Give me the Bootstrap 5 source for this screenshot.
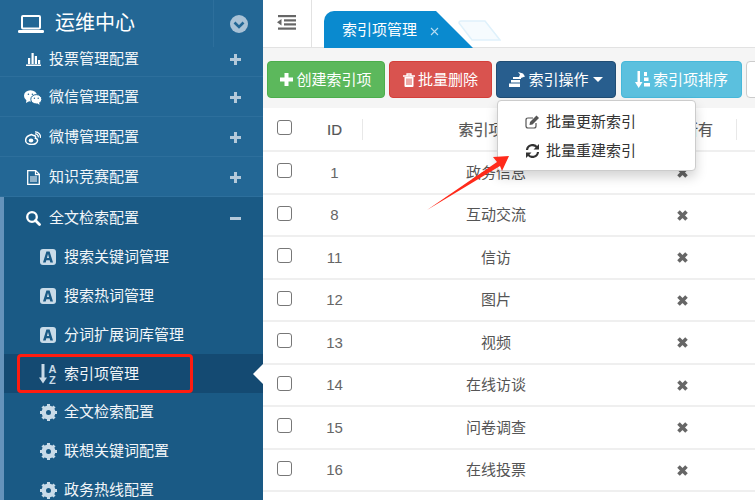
<!DOCTYPE html>
<html lang="zh-CN"><head><meta charset="utf-8">
<link href="https://cdn.jsdelivr.net/npm/bootstrap@5.3.0/dist/css/bootstrap.min.css" rel="stylesheet">
<style>
html,body{height:500px;overflow:hidden}
body{font-family:"Liberation Sans","Noto Sans CJK SC",sans-serif;font-size:15px;color:#555;background:#fff}
.app-shell{width:755px;height:500px;position:relative;overflow:hidden}
.side-bar{width:263px;height:500px;flex:none;background:#236795;color:#fff;overflow:hidden}
.brand-row{height:47px;margin-bottom:-5px;position:relative}
.brand-name{font-size:20px;margin-left:11px;line-height:46px;margin-top:-2px}
.brand-ico{margin-left:18px}
.brand-toggle{width:50px;height:47px;border-left:1px solid #2d6f9c;margin-left:auto}
.side-item{height:40px;border-bottom:1px solid #2d6f9c;padding:2px 22px 0 24px;font-size:15px;color:#f2f6f9}
.side-item.top-first{height:35px;padding-top:0}
.side-item .ico-slot{width:18px;margin-right:7px;flex:none;display:flex;justify-content:center}
.pm{margin-left:auto;fill:#b4c9da;display:block}
.side-open{background:#1a5a85;border-left:4px solid #6593bb;height:303px}
.side-open .side-item{border-bottom:0;padding-left:20px;padding-right:22px}
.sub-item{height:39px;padding:1px 0 0 35px;position:relative;color:#f2f6f9}
.sub-item.now~.sub-item{padding-top:0}
.sub-item .ico-slot{width:18px;margin-right:7px;flex:none;display:flex;justify-content:center}
.sub-item.now{background:#144a72}
.sub-item.now::after{content:"";position:absolute;right:0;top:10px;border:10px solid transparent;border-right-color:#fff;border-left:0}
.red-frame{position:absolute;left:13px;top:0;width:176px;height:39px;border:3px solid #ff1c10;border-radius:4px}
.main-pane{min-width:0;width:492px;flex:none}
.top-strip{height:48px;border-bottom:1px solid #e2e2e2;background:#fff}
.collapse-cell{width:49px;height:47px;border-right:1px solid #e2e2e2;flex:none;padding-top:15px;padding-left:14px}
.collapse-cell svg{display:block}
.tab-on{margin-left:12px;margin-top:11px;height:37px;width:112px;flex:none;background:#0a8acf;color:#fff;border-radius:10px 0 0 0;position:relative;padding:9px 0 0 18px;font-size:15px;line-height:20px;white-space:nowrap}
.tab-on::after{content:"";position:absolute;left:112px;top:0;border-style:solid;border-width:37px 0 0 37px;border-color:transparent transparent transparent #0a8acf}
.tab-x{position:relative;z-index:1;margin-left:13px}
.tab-ghost{margin-top:20px;margin-left:22px;display:block;flex:none}
.tool-strip{height:60px;background:#f5f5f5;padding:13px 0 0 4px;gap:4px}
.tool-btn{height:37px;border-radius:4px;font-size:15px;line-height:35px;padding:0;color:#fff;border:1px solid;white-space:nowrap;display:flex;align-items:center;justify-content:center;flex:none}
.tool-btn svg{margin-right:3px}
.tb-green{width:118px;background:#5cb85c;border-color:#4cae4c}
.tb-red{width:103px;background:#d9534f;border-color:#d43f3a}
.tb-navy{width:120px;background:#285e8e;border-color:#204d74}
.tb-cyan{width:121px;background:#5bc0de;border-color:#46b8da;margin-left:1px}
.tb-white{width:60px;background:#fff;border-color:#ccc}
.tb-caret{width:0;height:0;border-top:5px solid #fff;border-left:5px solid transparent;border-right:5px solid transparent;margin-left:4px}
.drop-box{position:absolute;left:497px;top:100px;width:199px;height:71px;background:#fff;border:1px solid #ccc;border-radius:4px;box-shadow:0 6px 12px rgba(0,0,0,.175);padding-top:6px;color:#333;z-index:3}
.drop-line{height:29px;padding-left:27px;font-size:15px;line-height:28px;gap:6px}
.data-grid{table-layout:fixed;width:492px;margin:0;color:#555}
.c-a{width:43px}.c-b{width:57px}.c-c{width:266px}.c-d{width:108px}
.data-grid th,.data-grid td{padding:0;text-align:center;vertical-align:middle;border-bottom:2px solid #efefef;background:#fff;font-size:15px;color:#555;box-shadow:none}
.data-grid th{height:43px;font-weight:400;position:relative;padding-top:3px;-webkit-text-stroke:.2px #555}
.data-grid th .chk-box{margin-top:-3px}
.data-grid td{height:42.5px;padding-top:1px}
.data-grid .id-cell{color:#666}
.col-sep::after{content:"";position:absolute;right:0;top:11px;height:21px;width:1px;background:#e8e8e8}
.chk-box{display:block;width:15px;height:15px;border:1.5px solid #777;border-radius:3px;margin:0 0 4px 14px;background:#fff}
.x-mark{display:inline-block;vertical-align:middle;margin:-2px 2px 0 0}
.arrow-mark{position:absolute;left:0;top:0;z-index:5;pointer-events:none}
</style></head><body>
<div class="app-shell d-flex">
<aside class="side-bar">
 <div class="brand-row d-flex align-items-center">
  <svg class="brand-ico" width="26" height="18" viewBox="0 0 26 18" fill="none"><rect x="4" y="1" width="18" height="12.500" rx="1" stroke="#fff" stroke-width="2"/><rect x="0" y="15" width="26" height="3" rx="1.200" fill="#fff"/></svg>
  <span class="brand-name">运维中心</span>
  <div class="brand-toggle d-flex align-items-center justify-content-center"><svg width="18" height="18" viewBox="0 0 18 18"><circle cx="9" cy="9" r="9" fill="#a9c2d6"/><path d="M4.500 7.500 9 12l4.500-4.500" stroke="#236795" stroke-width="2.600" fill="none"/></svg></div>
 </div>
 <div class="side-item top-first d-flex align-items-center"><span class="ico-slot"><svg width="15" height="13" viewBox="0 0 15 13" fill="#fff"><rect x="2" y="5" width="2.200" height="6"/><rect x="5.500" y="0" width="2.200" height="11"/><rect x="8.800" y="3" width="2.200" height="8"/><rect x="12" y="7" width="2.200" height="4"/><rect x="0" y="11.500" width="15" height="1.500"/></svg></span>投票管理配置<svg class="pm" width="11" height="11" viewBox="0 0 11 11"><path d="M4 0h3v4h4v3H7v4H4V7H0V4h4z"/></svg></div>
 <div class="side-item d-flex align-items-center"><span class="ico-slot"><svg width="18" height="15" viewBox="0 0 18 15" fill="#fff"><ellipse cx="6.500" cy="5.800" rx="6.500" ry="5.600"/><path d="M2.500 9.500 2 13l3.500-2z"/><ellipse cx="12.300" cy="9.300" rx="5.500" ry="4.700" stroke="#236795"/><path d="M15 12.500l.7 2.300-2.600-1.400z"/><circle cx="4.400" cy="4.200" r=".8" fill="#236795"/><circle cx="8.400" cy="4.200" r=".8" fill="#236795"/><circle cx="10.400" cy="8.200" r=".7" fill="#236795"/><circle cx="14.200" cy="8.200" r=".7" fill="#236795"/></svg></span>微信管理配置<svg class="pm" width="11" height="11" viewBox="0 0 11 11"><path d="M4 0h3v4h4v3H7v4H4V7H0V4h4z"/></svg></div>
 <div class="side-item d-flex align-items-center"><span class="ico-slot"><svg width="16" height="14" viewBox="0 0 16 14" fill="none"><path d="M6.500 3.500C3 4.500.6 7 .6 9.500c0 2.500 2.900 4 6 4 3.400 0 6-1.900 6-4 0-1.500-1.400-2-2.200-2.200.6-1.500.2-3-2-2.800z" stroke="#fff" stroke-width="1.500"/><ellipse cx="6" cy="9.500" rx="2.300" ry="1.900" fill="#fff"/><path d="M10 3a2.800 2.800 0 0 1 3.200 3.400M10 .8a5.200 5.200 0 0 1 5.400 6.200" stroke="#fff" stroke-width="1.300"/></svg></span>微博管理配置<svg class="pm" width="11" height="11" viewBox="0 0 11 11"><path d="M4 0h3v4h4v3H7v4H4V7H0V4h4z"/></svg></div>
 <div class="side-item d-flex align-items-center"><span class="ico-slot"><svg width="13" height="15" viewBox="0 0 13 15" fill="none"><path d="M.7.7h8l3.600 3.600v10H.7z" stroke="#fff" stroke-width="1.300"/><path d="M8.500.7v4h4" stroke="#fff" stroke-width="1.200"/><path d="M3 7h7M3 9h7M3 11h7" stroke="#fff" stroke-width="1.200"/></svg></span>知识竞赛配置<svg class="pm" width="11" height="11" viewBox="0 0 11 11"><path d="M4 0h3v4h4v3H7v4H4V7H0V4h4z"/></svg></div>
 <div class="side-open">
  <div class="side-item d-flex align-items-center"><span class="ico-slot"><svg width="15" height="15" viewBox="0 0 15 15" fill="none"><circle cx="6" cy="6" r="4.800" stroke="#fff" stroke-width="2.300"/><path d="m9.500 9.500 4 4" stroke="#fff" stroke-width="2.800" stroke-linecap="round"/></svg></span>全文检索配置<svg class="pm" width="11" height="3" viewBox="0 0 11 3"><rect width="11" height="3"/></svg></div>
  <div class="sub-item d-flex align-items-center"><span class="ico-slot"><svg width="16" height="16" viewBox="0 0 16 16"><rect width="16" height="16" rx="3" fill="#c9dbe8"/><path fill-rule="evenodd" d="M3 13.500 6.400 2.500h3.200L13 13.500h-2.700l-.6-2.300H6.300l-.6 2.300zM6.900 8.900h2.200L8 5z" fill="#1a5a85"/></svg></span>搜索关键词管理</div>
  <div class="sub-item d-flex align-items-center"><span class="ico-slot"><svg width="16" height="16" viewBox="0 0 16 16"><rect width="16" height="16" rx="3" fill="#c9dbe8"/><path fill-rule="evenodd" d="M3 13.500 6.400 2.500h3.200L13 13.500h-2.700l-.6-2.300H6.300l-.6 2.300zM6.900 8.900h2.200L8 5z" fill="#1a5a85"/></svg></span>搜索热词管理</div>
  <div class="sub-item d-flex align-items-center"><span class="ico-slot"><svg width="16" height="16" viewBox="0 0 16 16"><rect width="16" height="16" rx="3" fill="#c9dbe8"/><path fill-rule="evenodd" d="M3 13.500 6.400 2.500h3.200L13 13.500h-2.700l-.6-2.300H6.300l-.6 2.300zM6.900 8.900h2.200L8 5z" fill="#1a5a85"/></svg></span>分词扩展词库管理</div>
  <div class="sub-item now d-flex align-items-center"><span class="ico-slot"><svg width="18" height="20" viewBox="0 0 18 20" fill="#c9dbe8"><path d="M2.500 0h3v13.500H8L4 19.500 0 13.500h2.500z"/><text x="9.500" y="9" font-size="11" font-weight="700" font-family="Liberation Sans">A</text><text x="10" y="19.500" font-size="11" font-weight="700" font-family="Liberation Sans">Z</text></svg></span>索引项管理<span class="red-frame"></span></div>
  <div class="sub-item d-flex align-items-center"><span class="ico-slot"><svg width="17" height="17" viewBox="0 0 17 17"><circle cx="8.500" cy="8.500" r="5" fill="none" stroke="#c9dbe8" stroke-width="3.800"/><path d="M8.500 0v17M0 8.500h17M2.500 2.500l12 12M14.500 2.500l-12 12" stroke="#c9dbe8" stroke-width="3"/><circle cx="8.500" cy="8.500" r="2.500" fill="#1a5a85"/></svg></span>全文检索配置</div>
  <div class="sub-item d-flex align-items-center"><span class="ico-slot"><svg width="17" height="17" viewBox="0 0 17 17"><circle cx="8.500" cy="8.500" r="5" fill="none" stroke="#c9dbe8" stroke-width="3.800"/><path d="M8.500 0v17M0 8.500h17M2.500 2.500l12 12M14.500 2.500l-12 12" stroke="#c9dbe8" stroke-width="3"/><circle cx="8.500" cy="8.500" r="2.500" fill="#1a5a85"/></svg></span>联想关键词配置</div>
  <div class="sub-item d-flex align-items-center"><span class="ico-slot"><svg width="17" height="17" viewBox="0 0 17 17"><circle cx="8.500" cy="8.500" r="5" fill="none" stroke="#c9dbe8" stroke-width="3.800"/><path d="M8.500 0v17M0 8.500h17M2.500 2.500l12 12M14.500 2.500l-12 12" stroke="#c9dbe8" stroke-width="3"/><circle cx="8.500" cy="8.500" r="2.500" fill="#1a5a85"/></svg></span>政务热线配置</div>
 </div>
</aside>
<main class="main-pane">
 <div class="top-strip d-flex">
  <div class="collapse-cell"><svg width="19" height="15" viewBox="0 0 19 15" fill="#666"><rect x="1" y="0" width="18" height="2.200"/><rect x="7" y="4.300" width="12" height="2.200"/><rect x="7" y="8.300" width="12" height="2.200"/><rect x="1" y="12.500" width="18" height="2.200"/><path d="M0 7.300 4.500 4v6.600z"/></svg></div>
  <div class="tab-on">索引项管理<svg class="tab-x" width="9" height="9" viewBox="0 0 9 9" stroke="#b8dcf2" stroke-width="1.100"><path d="M1 1l7 7M8 1 1 8"/></svg></div>
  <svg class="tab-ghost" width="43" height="21" viewBox="0 0 43 21" fill="#f6fbfe" stroke="#dff1fb" stroke-width="1.500"><path d="M1 3Q1 1 3 1h24l15 19H14z"/></svg>
 </div>
 <div class="tool-strip d-flex">
  <button class="tool-btn tb-green" type="button"><svg width="13" height="13" viewBox="0 0 13 13" fill="#fff"><path d="M4.500 0h4v4.500H13v4H8.500V13h-4V8.500H0v-4h4.500z"/></svg>创建索引项</button>
  <button class="tool-btn tb-red" type="button"><svg width="12" height="14" viewBox="0 0 12 14" fill="none"><path d="M0 3h12M4 3V1h4v2" stroke="#fff" stroke-width="1.300"/><path d="M1.500 4h9v9q0 1-1 1h-7q-1 0-1-1z" fill="#fff"/><path d="M4 5.500v6.500M6 5.500v6.500M8 5.500v6.500" stroke="#d9534f"/></svg>批量删除</button>
  <button class="tool-btn tb-navy" type="button"><svg width="16" height="15" viewBox="0 0 16 15" fill="#fff"><path d="M0 11.500h11V15H0zM2 8h9v2.500H2zM4 5h6l1-2.500L9 0l5 1.500 2 3-4 1.500V7H4z"/></svg>索引操作<span class="tb-caret"></span></button>
  <button class="tool-btn tb-cyan" type="button"><svg width="15" height="17" viewBox="0 0 15 17" fill="#fff"><path d="M2.500 0h2.500v11h2.500L3.700 17 0 11h2.500zM9 1h3v4H9zM9 6.500h4.500V10H9zM9 12h6v3.500H9z"/></svg>索引项排序</button>
  <div class="tool-btn tb-white"></div>
 </div>
 <table class="table data-grid">
  <colgroup><col class="c-a"><col class="c-b"><col class="c-c"><col class="c-d"><col></colgroup>
  <thead><tr><th><span class="chk-box"></span></th><th class="col-sep">ID</th><th>索引项名称</th><th class="col-sep">是否所有</th><th></th></tr></thead>
  <tbody>
   <tr><td><span class="chk-box"></span></td><td class="id-cell">1</td><td>政务信息</td><td><svg class="x-mark" width="11" height="11" viewBox="0 0 11 11"><path d="M1.500 1.500 9.500 9.500M9.500 1.500 1.500 9.500" stroke="#666" stroke-width="3.600"/></svg></td><td></td></tr>
   <tr><td><span class="chk-box"></span></td><td class="id-cell">8</td><td>互动交流</td><td><svg class="x-mark" width="11" height="11" viewBox="0 0 11 11"><path d="M1.500 1.500 9.500 9.500M9.500 1.500 1.500 9.500" stroke="#666" stroke-width="3.600"/></svg></td><td></td></tr>
   <tr><td><span class="chk-box"></span></td><td class="id-cell">11</td><td>信访</td><td><svg class="x-mark" width="11" height="11" viewBox="0 0 11 11"><path d="M1.500 1.500 9.500 9.500M9.500 1.500 1.500 9.500" stroke="#666" stroke-width="3.600"/></svg></td><td></td></tr>
   <tr><td><span class="chk-box"></span></td><td class="id-cell">12</td><td>图片</td><td><svg class="x-mark" width="11" height="11" viewBox="0 0 11 11"><path d="M1.500 1.500 9.500 9.500M9.500 1.500 1.500 9.500" stroke="#666" stroke-width="3.600"/></svg></td><td></td></tr>
   <tr><td><span class="chk-box"></span></td><td class="id-cell">13</td><td>视频</td><td><svg class="x-mark" width="11" height="11" viewBox="0 0 11 11"><path d="M1.500 1.500 9.500 9.500M9.500 1.500 1.500 9.500" stroke="#666" stroke-width="3.600"/></svg></td><td></td></tr>
   <tr><td><span class="chk-box"></span></td><td class="id-cell">14</td><td>在线访谈</td><td><svg class="x-mark" width="11" height="11" viewBox="0 0 11 11"><path d="M1.500 1.500 9.500 9.500M9.500 1.500 1.500 9.500" stroke="#666" stroke-width="3.600"/></svg></td><td></td></tr>
   <tr><td><span class="chk-box"></span></td><td class="id-cell">15</td><td>问卷调查</td><td><svg class="x-mark" width="11" height="11" viewBox="0 0 11 11"><path d="M1.500 1.500 9.500 9.500M9.500 1.500 1.500 9.500" stroke="#666" stroke-width="3.600"/></svg></td><td></td></tr>
   <tr><td><span class="chk-box"></span></td><td class="id-cell">16</td><td>在线投票</td><td><svg class="x-mark" width="11" height="11" viewBox="0 0 11 11"><path d="M1.500 1.500 9.500 9.500M9.500 1.500 1.500 9.500" stroke="#666" stroke-width="3.600"/></svg></td><td></td></tr>
  </tbody>
 </table>
 <div class="drop-box">
  <div class="drop-line d-flex align-items-center"><svg width="15" height="14" viewBox="0 0 15 14" fill="none"><path d="M11 8v3q0 2-2 2H3q-2 0-2-2V5q0-2 2-2h5" stroke="#555" stroke-width="1.200"/><path d="M5 7 11.500 .5l2.500 2.500L7.500 9.500 4.500 10z" fill="#555"/></svg><span>批量更新索引</span></div>
  <div class="drop-line d-flex align-items-center"><svg width="15" height="14" viewBox="0 0 15 14" fill="none" stroke="#333" stroke-width="2.200"><path d="M2 6a5.500 5.500 0 0 1 10-2.500M13 8a5.500 5.500 0 0 1-10 2.500"/><path d="M14 0v5.500H8.500zM1 14V8.500h5.500z" fill="#333" stroke="none"/></svg><span>批量重建索引</span></div>
 </div>
</main>
<svg class="arrow-mark" width="755" height="500" viewBox="0 0 755 500"><path d="M427 210 497 162 493 157 509 156 502 171 500 166z" fill="#ff2a1a"/></svg>
</div>
<script src="https://cdn.jsdelivr.net/npm/bootstrap@5.3.0/dist/js/bootstrap.bundle.min.js"></script>
</body></html>
